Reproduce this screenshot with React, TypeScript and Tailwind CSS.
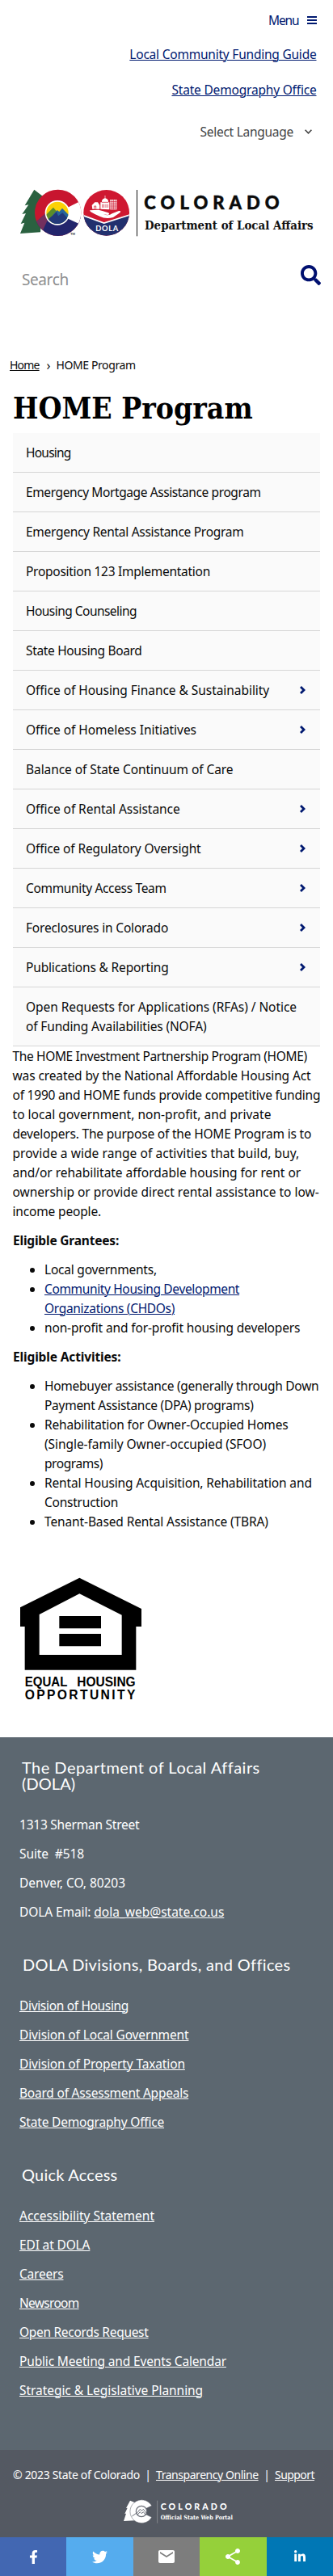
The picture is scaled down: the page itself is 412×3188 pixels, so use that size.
import React from "react";
import { FaFacebookF, FaLinkedinIn, FaSearch, FaTwitter } from "react-icons/fa";
import { MdEmail, MdShare } from "react-icons/md";

type Line = [text: string, tracking: string];
type NavItem = { lines: Line[]; more?: boolean };

const navItems: NavItem[] = [
  { lines: [["Housing", "tracking-[-0.77px]"]] },
  { lines: [["Emergency Mortgage Assistance program", "tracking-[-0.4px]"]] },
  { lines: [["Emergency Rental Assistance Program", "tracking-[-0.29px]"]] },
  { lines: [["Proposition 123 Implementation", "tracking-[-0.27px]"]] },
  { lines: [["Housing Counseling", "tracking-[-0.53px]"]] },
  { lines: [["State Housing Board", "tracking-[-0.34px]"]] },
  { lines: [["Office of Housing Finance & Sustainability", "tracking-[-0.05px]"]], more: true },
  { lines: [["Office of Homeless Initiatives", "tracking-[-0.04px]"]], more: true },
  { lines: [["Balance of State Continuum of Care", "tracking-[-0.07px]"]] },
  { lines: [["Office of Rental Assistance", "tracking-[-0.06px]"]], more: true },
  { lines: [["Office of Regulatory Oversight", "tracking-[-0.13px]"]], more: true },
  { lines: [["Community Access Team", "tracking-[-0.34px]"]], more: true },
  { lines: [["Foreclosures in Colorado", "tracking-[-0.17px]"]], more: true },
  { lines: [["Publications & Reporting", "tracking-[-0.16px]"]], more: true },
  {
    lines: [
      ["Open Requests for Applications (RFAs) / Notice", "tracking-[-0.06px]"],
      ["of Funding Availabilities (NOFA)", "tracking-[-0.14px]"],
    ],
  },
];

const intro: Line[] = [
  ["The HOME Investment Partnership Program (HOME)", "tracking-[-0.36px]"],
  ["was created by the National Affordable Housing Act", "tracking-[-0.11px]"],
  ["of 1990 and HOME funds provide competitive funding", "tracking-[-0.21px]"],
  ["to local government, non-profit, and private", "tracking-[0.03px]"],
  ["developers. The purpose of the HOME Program is to", "tracking-[-0.19px]"],
  ["provide a wide range of activities that build, buy,", "tracking-[0.06px]"],
  ["and/or rehabilitate affordable housing for rent or", "tracking-[-0.03px]"],
  ["ownership or provide direct rental assistance to low-", "tracking-[-0.01px]"],
  ["income people.", "tracking-[-0.16px]"],
];

const grantees: { lines: Line[]; link?: boolean }[] = [
  { lines: [["Local governments,", "tracking-[-0.22px]"]] },
  {
    lines: [
      ["Community Housing Development", "tracking-[-0.36px]"],
      ["Organizations (CHDOs)", "tracking-[-0.31px]"],
    ],
    link: true,
  },
  { lines: [["non-profit and for-profit housing developers", "tracking-[-0.14px]"]] },
];

const activities: { lines: Line[]; link?: boolean }[] = [
  {
    lines: [
      ["Homebuyer assistance (generally through Down", "tracking-[-0.26px]"],
      ["Payment Assistance (DPA) programs)", "tracking-[-0.27px]"],
    ],
  },
  {
    lines: [
      ["Rehabilitation for Owner-Occupied Homes", "tracking-[-0.17px]"],
      ["(Single-family Owner-occupied (SFOO)", "tracking-[-0.06px]"],
      ["programs)", "tracking-[-0.43px]"],
    ],
  },
  {
    lines: [
      ["Rental Housing Acquisition, Rehabilitation and", "tracking-[-0.13px]"],
      ["Construction", "tracking-[-0.23px]"],
    ],
  },
  { lines: [["Tenant-Based Rental Assistance (TBRA)", "tracking-[-0.12px]"]] },
];

const divisions: Line[] = [
  ["Division of Housing", "tracking-[-0.33px]"],
  ["Division of Local Government", "tracking-[-0.14px]"],
  ["Division of Property Taxation", "tracking-[-0.14px]"],
  ["Board of Assessment Appeals", "tracking-[-0.22px]"],
  ["State Demography Office", "tracking-[-0.19px]"],
];

const quickLinks: Line[] = [
  ["Accessibility Statement", "tracking-[0px]"],
  ["EDI at DOLA", "tracking-[-0.15px]"],
  ["Careers", "tracking-[-0.2px]"],
  ["Newsroom", "tracking-[-0.7px]"],
  ["Open Records Request", "tracking-[-0.3px]"],
  ["Public Meeting and Events Calendar", "tracking-[-0.16px]"],
  ["Strategic & Legislative Planning", "tracking-[-0.05px]"],
];

const share = [
  { label: "Facebook", bg: "bg-[#4267b2]", icon: <FaFacebookF size={17} /> },
  { label: "Twitter", bg: "bg-[#55acee]", icon: <FaTwitter size={19} /> },
  { label: "Email", bg: "bg-[#7d7d7d]", icon: <MdEmail size={24} /> },
  { label: "ShareThis", bg: "bg-[#95d03a]", icon: <MdShare size={24} /> },
  { label: "LinkedIn", bg: "bg-[#0077b5]", icon: <FaLinkedinIn size={16} /> },
];

const underlined = "underline decoration-1 underline-offset-[1px]";

function Lines({ lines, className = "" }: { lines: Line[]; className?: string }) {
  return (
    <>
      {lines.map(([text, tracking]) => (
        <span key={text} className={`block whitespace-nowrap ${tracking} ${className}`}>
          {text}
        </span>
      ))}
    </>
  );
}

function DolaLogo() {
  return (
    <svg width="366" height="60" viewBox="72 102 1098 180" role="img" aria-label="Colorado Department of Local Affairs">
      <defs>
        <clipPath id="c-clip"><circle cx="215" cy="190" r="86" /></clipPath>
        <clipPath id="disc-clip"><circle cx="213" cy="190" r="41" /></clipPath>
        <clipPath id="dola-clip"><circle cx="395" cy="190" r="85" /></clipPath>
      </defs>
      <path d="M127 104 L92 163 L106 160 L82 195 L96 192 L77 231 L91 227 L75 267 L150 262 L160 130 Z" fill="#2a6140" />
      <g clipPath="url(#c-clip)">
        <rect x="120" y="100" width="190" height="180" fill="#c8152f" />
        <path d="M130 228 L172 190 L214 200 L300 190 V290 H120 Z" fill="#22256c" />
        <path d="M128 228 L170 192 L178 214 L156 262 Z" fill="#73305e" />
        <path d="M310 100 H292 V150 L240 176 V206 L292 230 V290 H310 Z" fill="#fff" />
      </g>
      <circle cx="213" cy="190" r="46" fill="#fff" />
      <g clipPath="url(#disc-clip)">
        <rect x="170" y="145" width="90" height="90" fill="#fbd105" />
        <path d="M168 200 L198 170 L214 190 L222 240 H168 Z" fill="#5b8c2a" />
        <path d="M196 198 L212 180 L220 186 L231 173 L262 205 V240 H190 Z" fill="#28669a" />
        <path d="M198 198 L210 186 L216 202 L232 190 L262 222 V240 H168 L176 216 Z" fill="#22397a" />
      </g>
      <text x="262" y="273" fontSize="11" fontWeight="700" fontFamily="Lato, sans-serif" fill="#222">TM</text>

      <g clipPath="url(#dola-clip)">
        <rect x="305" y="100" width="180" height="180" fill="#cf1831" />
        <path d="M300 195 L386 227 L490 195 V290 H300 Z" fill="#22306e" />
        <path d="M300 197 L386 228 L490 195" fill="none" stroke="#fff" strokeWidth="5" />
      </g>
      <g fill="#fff">
        <path d="M333 181 L366 179 Q381 183 402 190 Q410 195 400 198 L384 196 Q404 203 416 193 L441 183 Q452 182 445 190 L420 207 Q392 214 370 203 Q352 196 336 186 Z" />
        <path d="M341 162 L352 151 H363 L370 162 V176 H343 Z" />
        <path d="M373 176 V151 H378 V145 Q381 137 389 136 V126 H391 V136 Q399 137 402 145 V151 H406 V178 Z" />
        <path d="M409 141 H433 V178 H409 Z" />
      </g>
      <path d="M350 176 V165 H356 V176 M380 158 V171 M386 158 V171 M393 158 V171 M400 158 V171 M378 151 H402 M415 141 V178 M421 141 V178 M427 141 V178 M409 149 H433 M409 157 H433 M409 165 H433 M409 172 H433" fill="none" stroke="#cf1831" strokeWidth="2.2" />
      <text x="355" y="258" fontSize="28" fontWeight="700" fontFamily="Lato, sans-serif" fill="#fff" textLength="84">DOLA</text>

      <path d="M508.500 105 V277" stroke="#111" strokeWidth="3" />
      <text x="535" y="178" fontSize="66" fontWeight="900" fontFamily="Lato, sans-serif" fill="#0b0b0b" textLength="502" stroke="#0b0b0b" strokeWidth="1.500">COLORADO</text>
      <text x="537" y="252" fontSize="44" fontWeight="700" fontFamily="'DejaVu Serif Condensed', 'DejaVu Serif', serif" fill="#111" textLength="626" lengthAdjust="spacingAndGlyphs">Department of Local Affairs</text>
    </svg>
  );
}

function EqualHousing() {
  return (
    <svg width="150" height="152" viewBox="75 126 450 456" role="img" aria-label="Equal Housing Opportunity">
      <path fillRule="evenodd" d="M295 128 L525 243 V309 H505 V470 H92 V309 H75 V238 Z M295 187 L146 264 V414 H452 V266 Z" />
      <path d="M220 270 H375 V316 H220 Z M220 336 H375 V382 H220 Z" />
      <g fontFamily="'Liberation Sans', sans-serif" fontWeight="700" fontSize="47">
        <text x="92" y="531" textLength="158" lengthAdjust="spacingAndGlyphs">EQUAL</text>
        <text x="286" y="531" textLength="217" lengthAdjust="spacingAndGlyphs">HOUSING</text>
        <text x="92" y="578" textLength="410">OPPORTUNITY</text>
      </g>
    </svg>
  );
}

function PortalLogo() {
  return (
    <svg width="138" height="32" viewBox="453 336 414 96" role="img" aria-label="Colorado Official State Web Portal">
      <path d="M483 344 L468 372 L473 371 L463 393 L468 392 L459 420 L500 418 L502 352 Z" fill="#fff" />
      <path d="M563 363 A43 43 0 1 0 563 406 L543 396 L538 384 L543 373 Z" fill="#fff" stroke="#545962" strokeWidth="1.500" />
      <circle cx="525" cy="384" r="20" fill="#fff" stroke="#6c7079" strokeWidth="3.500" />
      <path d="M507 392 L520 376 L526 382 L532 376 L543 390 M490 402 L507 390 M511 396 L520 386 L526 392 L532 386 L540 396" fill="none" stroke="#6c7079" strokeWidth="3" />
      <path d="M584 344 V428" stroke="#8b8e95" strokeWidth="2.500" />
      <text x="596" y="377" fontSize="32" fontWeight="900" fontFamily="Lato, sans-serif" fill="#fff" textLength="246">COLORADO</text>
      <text x="596" y="414" fontSize="22" fontWeight="700" fontFamily="'DejaVu Serif Condensed', 'DejaVu Serif', serif" fill="#fff" textLength="268" lengthAdjust="spacingAndGlyphs">Official State Web Portal</text>
    </svg>
  );
}

function FooterLinks({ links }: { links: Line[] }) {
  return (
    <ul className="flex flex-col gap-3">
      {links.map(([text, tracking]) => (
        <li key={text} className="h-6">
          <a className={`${underlined} ${tracking}`}>{text}</a>
        </li>
      ))}
    </ul>
  );
}

function BulletList({ items }: { items: { lines: Line[]; link?: boolean }[] }) {
  return (
    <ul className="list-disc pl-[39px]">
      {items.map((item) => (
        <li key={item.lines[0][0]}>
          <Lines lines={item.lines} className={item.link ? `text-[#001970] ${underlined}` : ""} />
        </li>
      ))}
    </ul>
  );
}

export default function App() {
  return (
    <div className="w-[412px] bg-white font-['Noto_Sans',sans-serif] text-[15.5px] leading-6 text-[#0a0a0a]">
      <header className="h-[440px] pt-[13px]">
        <div className="flex flex-col items-end pr-[20.5px] text-[#001970]">
          <button className="flex items-center gap-[10px]">
            <span className="text-[15.5px] leading-6 tracking-[-1.1px]">Menu</span>
            <svg width="12" height="12" viewBox="0 0 12 12" stroke="currentColor" strokeWidth="2"><path d="M0 2h12M0 6h12M0 10h12" /></svg>
          </button>
          <a className={`${underlined} mt-[18px] tracking-[-0.22px]`}>Local Community Funding Guide</a>
          <a className={`${underlined} mt-5 tracking-[-0.19px]`}>State Demography Office</a>
        </div>
        <div className="mt-7 flex h-6 items-center justify-end gap-[14px] pr-[26px] text-[#444]">
          <span className="tracking-[-0.27px]">Select Language</span>
          <svg width="9" height="6" viewBox="0 0 9 6" fill="none" stroke="currentColor" strokeWidth="1.6"><path d="M0.600 0.800 L4.500 4.800 L8.400 0.800" /></svg>
        </div>
        <div className="mt-[59px] pl-6"><DolaLogo /></div>
        <div className="mt-[34px] flex justify-between pl-[27px] pr-[15px]">
          <span className="mt-1 text-[19px] leading-7 tracking-[-0.4px] text-[#8e8e8e]">Search</span>
          <FaSearch size={25} className="text-[#001070]" />
        </div>
      </header>

      <main className="px-4">
        <nav className="-ml-1 flex text-[14px] leading-6">
          <a className={`${underlined} w-[38.5px] tracking-[-0.8px]`}>Home</a>
          <span className="w-[19px] text-center text-[16px]">›</span>
          <span className="tracking-[-0.4px]">HOME Program</span>
        </nav>
        <h1 className="mt-[21px] whitespace-nowrap font-['DejaVu_Serif_Condensed','DejaVu_Serif',serif] text-[37px] font-bold leading-10 text-black">HOME Program</h1>
        <ul className="mt-[11px]">
          {navItems.map((item) => (
            <li key={item.lines[0][0]} className="flex items-center justify-between border-b border-[#d6d6d6] bg-[#fafafa] py-3 pl-4 pr-[18px]">
              <div><Lines lines={item.lines} /></div>
              {item.more && (
                <svg width="7" height="10" viewBox="0 0 7 10" fill="none" stroke="#001970" strokeWidth="2.8"><path d="M1 1 L5 5 L1 9" /></svg>
              )}
            </li>
          ))}
        </ul>

        <p className="-ml-[0.5px]"><Lines lines={intro} /></p>
        <p className="my-3 font-bold tracking-[-0.2px]">Eligible Grantees:</p>
        <BulletList items={grantees} />
        <p className="my-3 font-bold tracking-[-0.15px]">Eligible Activities:</p>
        <BulletList items={activities} />
        <div className="mt-[57px] pl-[9px]"><EqualHousing /></div>
      </main>

      <footer className="mt-[46px] text-white">
        <div className="h-[882px] bg-[#5c6770] px-6 pt-[27px]">
          <h2 className="pl-[3px] font-['Lato',sans-serif] text-[20px] leading-5">
            <span className="block tracking-[0.47px]">The Department of Local Affairs</span>
            <span className="block tracking-[0.1px]">(DOLA)</span>
          </h2>
          <div className="mt-[29px] flex flex-col gap-3">
            <p className="tracking-[-0.23px]">1313 Sherman Street</p>
            <p className="whitespace-pre tracking-[-0.1px]">Suite  #518</p>
            <p className="tracking-[-0.05px]">Denver, CO, 80203</p>
            <p><span className="tracking-[-0.1px]">DOLA Email: </span><a className={underlined}>dola_web@state.co.us</a></p>
          </div>
          <h2 className="mb-[29px] mt-[43px] pl-1 font-['Lato',sans-serif] text-[20px] leading-5 tracking-[0.33px]">DOLA Divisions, Boards, and Offices</h2>
          <FooterLinks links={divisions} />
          <h2 className="mb-[29px] mt-[43px] pl-[3px] font-['Lato',sans-serif] text-[20px] leading-5 tracking-[0.22px]">Quick Access</h2>
          <FooterLinks links={quickLinks} />
        </div>
        <div className="h-[108px] bg-[#545962] pt-[19px]">
          <div className="flex whitespace-nowrap pl-4 text-[14px] leading-6">
            <span className="w-[157px] tracking-[-0.33px]">© 2023 State of Colorado</span>
            <span className="w-5 text-center">|</span>
            <a className={`w-[127px] tracking-[-0.45px] ${underlined}`}>Transparency Online</a>
            <span className="w-5 text-center">|</span>
            <a className={`tracking-[-0.55px] ${underlined}`}>Support</a>
          </div>
          <div className="mt-[17px] pl-[151px]"><PortalLogo /></div>
        </div>
        <div className="grid h-12 grid-cols-5">
          {share.map((s) => (
            <button key={s.label} aria-label={s.label} className={`flex items-center justify-center ${s.bg}`}>{s.icon}</button>
          ))}
        </div>
      </footer>
    </div>
  );
}
